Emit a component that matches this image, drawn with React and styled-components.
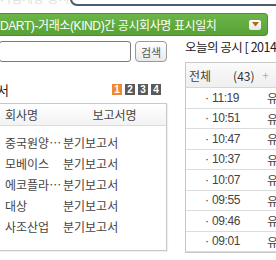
import styled, { createGlobalStyle } from "styled-components";

const GlobalStyle = createGlobalStyle`
  html, body {
    margin: 0;
    padding: 0;
    background: #fff;
  }
  body {
    width: 276px;
    height: 260px;
    overflow: hidden;
    font-family: "Liberation Sans", "Noto Sans CJK KR", sans-serif;
    font-size: 12px;
    color: #333;
  }
`;

const companies = [
  { name: "중국원양…", report: "분기보고서" },
  { name: "모베이스", report: "분기보고서" },
  { name: "에코플라…", report: "분기보고서" },
  { name: "대상", report: "분기보고서" },
  { name: "사조산업", report: "분기보고서" },
];

const times = ["11:19", "10:51", "10:47", "10:37", "10:07", "09:55", "09:46", "09:01"];

export default function App() {
  return (
    <>
      <GlobalStyle />
      <Page>
        <TopStrip>
          <FadedText>기업개황 공시</FadedText>
          <TopInput />
        </TopStrip>

        <GreenBar>
          <BarText>DART)-거래소(KIND)간 공시회사명 표시일치</BarText>
          <DropButton>
            <svg width="7" height="5" viewBox="0 0 7 5">
              <path d="M0 0 H7 L3.5 4.5 Z" fill="#b5651d" />
            </svg>
          </DropButton>
        </GreenBar>

        <Columns>
          <LeftCol>
            <SearchRow>
              <SearchInput />
              <SearchButton>검색</SearchButton>
            </SearchRow>

            <TitleRow>
              <Title>서</Title>
              <Pager>
                {[1, 2, 3, 4].map((n) => (
                  <PageNum key={n} $active={n === 1}>
                    {n}
                  </PageNum>
                ))}
              </Pager>
            </TitleRow>

            <ListBox>
              <ListHead>
                <span>회사명</span>
                <HeadCenter>보고서명</HeadCenter>
              </ListHead>
              <ListBody>
                {companies.map((c) => (
                  <ListRow key={c.name}>
                    <span>{c.name}</span>
                    <span>{c.report}</span>
                  </ListRow>
                ))}
              </ListBody>
            </ListBox>
          </LeftCol>

          <RightCol>
            <TodayTitle>오늘의 공시 [ 2014.05.15 ]</TodayTitle>
            <TodayBox>
              <TodayHead>
                <span>전체</span>
                <Count>(43)</Count>
                <Plus>+</Plus>
              </TodayHead>
              {times.map((t) => (
                <TimeRow key={t}>
                  <Dot>·</Dot>
                  <Time>{t}</Time>
                  <Market>유</Market>
                </TimeRow>
              ))}
            </TodayBox>
          </RightCol>
        </Columns>
      </Page>
    </>
  );
}

const Page = styled.div`
  width: 276px;
  height: 260px;
  overflow: hidden;
`;

const TopStrip = styled.div`
  height: 6px;
  display: flex;
  align-items: flex-end;
  overflow: hidden;
`;

const FadedText = styled.span`
  width: 78px;
  color: #dedede;
  font-size: 12px;
  line-height: 14px;
  white-space: nowrap;
`;

const TopInput = styled.div`
  flex: none;
  width: 230px;
  height: 22px;
  border: 2px solid #4b5b70;
  border-radius: 7px;
  box-sizing: border-box;
`;

const GreenBar = styled.div`
  margin-top: 7px;
  width: 268px;
  height: 23px;
  box-sizing: border-box;
  background: linear-gradient(#6cb548, #58a135);
  border: 1px solid #4d8f2d;
  border-left: none;
  border-radius: 0 4px 4px 0;
  display: flex;
  align-items: center;
  justify-content: space-between;
  padding-right: 6px;
`;

const BarText = styled.span`
  color: #fff;
  font-size: 12px;
  white-space: nowrap;
  letter-spacing: -0.4px;
`;

const DropButton = styled.span`
  width: 12px;
  height: 10px;
  background: linear-gradient(#ffffff, #e6e6e6);
  border-radius: 2px;
  display: flex;
  align-items: center;
  justify-content: center;
`;

const Columns = styled.div`
  display: flex;
  align-items: flex-start;
`;

const LeftCol = styled.div`
  width: 168px;
  margin-left: -1px;
  flex: none;
`;

const SearchRow = styled.div`
  margin-top: 5px;
  display: flex;
  align-items: center;
  gap: 4px;
`;

const SearchInput = styled.div`
  width: 132px;
  height: 21px;
  box-sizing: border-box;
  border: 1px solid #7a7a7a;
  border-radius: 3px;
  background: #fff;
`;

const SearchButton = styled.button`
  width: 32px;
  height: 21px;
  padding: 0;
  box-sizing: border-box;
  border: 1px solid #9a9a9a;
  border-radius: 4px;
  background: linear-gradient(#ffffff, #e9e9e9);
  font-family: "Noto Sans CJK KR", sans-serif;
  font-size: 11px;
  color: #555;
`;

const TitleRow = styled.div`
  margin-top: 21px;
  height: 12px;
  display: flex;
  align-items: center;
  justify-content: space-between;
  padding-right: 6px;
`;

const Title = styled.span`
  font-family: "Noto Sans CJK KR", sans-serif;
  font-size: 13px;
  color: #222;
  margin-left: -2px;
`;

const Pager = styled.div`
  display: flex;
  gap: 3px;
`;

const PageNum = styled.span`
  width: 10px;
  height: 11px;
  background: ${(p) => (p.$active ? "#f08a30" : "#5a5a5a")};
  color: #fff;
  font-size: 10px;
  line-height: 11px;
  text-align: center;
  font-weight: bold;
`;

const ListBox = styled.div`
  margin-top: 8px;
  height: 148px;
  box-sizing: border-box;
  border: 1px solid #c8c8c8;
  box-shadow: 1px 1px 1px rgba(0, 0, 0, 0.06);
`;

const ListHead = styled.div`
  height: 21px;
  display: grid;
  grid-template-columns: 58px 1fr;
  align-items: center;
  padding-left: 5px;
  border-bottom: 1px solid #dcdcdc;
  background: linear-gradient(#ffffff, #f2f2f2);
  font-family: "Noto Sans CJK KR", sans-serif;
  font-size: 12px;
  color: #444;
`;

const HeadCenter = styled.span`
  text-align: center;
`;

const ListBody = styled.div`
  padding-top: 6px;
`;

const ListRow = styled.div`
  height: 21px;
  display: grid;
  grid-template-columns: 58px 1fr;
  align-items: center;
  padding-left: 5px;
  font-family: "Noto Sans CJK KR", sans-serif;
  font-size: 12px;
  color: #444;
  white-space: nowrap;
`;

const RightCol = styled.div`
  margin-left: 18px;
  width: 120px;
  flex: none;
`;

const TodayTitle = styled.div`
  margin-top: 4px;
  height: 14px;
  line-height: 14px;
  font-family: "Noto Sans CJK KR", sans-serif;
  font-size: 12.5px;
  letter-spacing: -0.5px;
  color: #222;
  white-space: nowrap;
`;

const TodayBox = styled.div`
  margin-top: 8px;
  border: 1px solid #c8c8c8;
  border-right: none;
`;

const TodayHead = styled.div`
  height: 24px;
  display: flex;
  align-items: center;
  padding-left: 3px;
  background: linear-gradient(#fafafa, #efefef);
  border-bottom: 1px solid #d6d6d6;
  font-family: "Noto Sans CJK KR", sans-serif;
  font-size: 12px;
  color: #444;
`;

const Count = styled.span`
  margin-left: 22px;
  color: #333;
`;

const Plus = styled.span`
  margin-left: 8px;
  color: #aaa;
  font-size: 11px;
`;

const TimeRow = styled.div`
  height: 19.5px;
  display: flex;
  align-items: center;
  padding-left: 19px;
  border-bottom: 1px solid #dcdcdc;
  font-size: 12px;
  color: #444;
  white-space: nowrap;
`;

const Dot = styled.span`
  width: 7px;
`;

const Time = styled.span`
  width: 55px;
  letter-spacing: -0.4px;
`;

const Market = styled.span`
  font-family: "Noto Sans CJK KR", sans-serif;
`;
